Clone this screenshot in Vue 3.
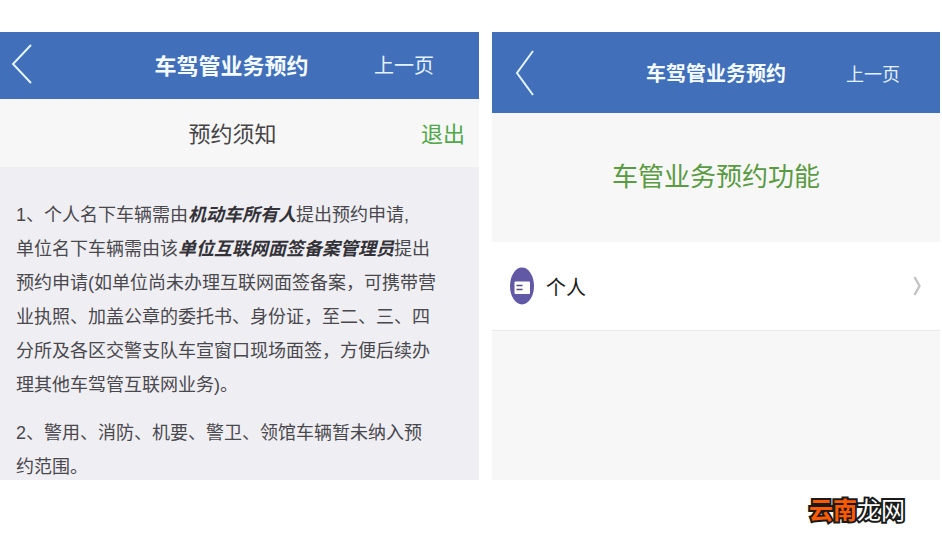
<template>
  <div class="page">
    <main class="screens">
      <section class="screen notice">
        <header class="bar">
          <button class="back" type="button" aria-label="返回">
            <svg width="22" height="42" viewBox="0 0 22 42"><path d="M20 2 L2 21 L20 40" /></svg>
          </button>
          <h1>车驾管业务预约</h1>
          <a class="prev" href="#">上一页</a>
        </header>
        <div class="sub-bar">
          <h2>预约须知</h2>
          <button class="exit" type="button">退出</button>
        </div>
        <div class="content">
          <p>
            1、个人名下车辆需由<em>机动车所有人</em>提出预约申请,<br />
            单位名下车辆需由该<em>单位互联网面签备案管理员</em>提出<br />
            预约申请(如单位尚未办理互联网面签备案，可携带营<br />
            业执照、加盖公章的委托书、身份证，至二、三、四<br />
            分所及各区交警支队车宣窗口现场面签，方便后续办<br />
            理其他车驾管互联网业务)。
          </p>
          <p>
            2、警用、消防、机要、警卫、领馆车辆暂未纳入预<br />
            约范围。
          </p>
        </div>
      </section>

      <section class="screen menu">
        <header class="bar">
          <button class="back" type="button" aria-label="返回">
            <svg width="20" height="48" viewBox="0 0 20 48"><path d="M18 2 L2 24 L18 46" /></svg>
          </button>
          <h1>车驾管业务预约</h1>
          <a class="prev" href="#">上一页</a>
        </header>
        <h2 class="menu-title">车管业务预约功能</h2>
        <a v-for="item in items" :key="item" class="row" href="#">
          <svg class="badge" width="24" height="38" viewBox="0 0 24 38">
            <ellipse cx="12" cy="19" rx="12" ry="18.5" fill="#6259a6" />
            <rect x="4.5" y="14.5" width="15.5" height="12.5" rx="1" fill="#fff" />
            <path d="M6.5 18.5 H12.5 M6.5 22.5 H12.5" stroke="#554d80" stroke-width="1.6" />
          </svg>
          <span>{{ item }}</span>
          <svg class="chevron" width="9" height="22" viewBox="0 0 9 22"><path d="M2.5 2 L7.5 11 L2.5 20" /></svg>
        </a>
      </section>
    </main>

    <footer class="footer">
      <span class="logo"><b>云南</b>龙网</span>
    </footer>
  </div>
</template>

<script setup>
const items = ['个人'];
</script>

<style>
body {
  margin: 0;
  background: #fff;
}
</style>

<style scoped>
.page {
  display: flex;
  flex-direction: column;
  height: 100vh;
  box-sizing: border-box;
  padding-top: 32px;
  font-family: 'Liberation Sans', 'Noto Sans CJK SC', sans-serif;
}

.screens {
  flex: 1;
  min-height: 0;
  display: grid;
  grid-template-columns: 479fr 448fr;
  grid-template-rows: 100%;
  gap: 13px;
  padding-right: 2px;
}

.screen {
  min-width: 0;
  overflow: hidden;
  background: #f7f7f7;
}

h1, h2, p {
  margin: 0;
}

button {
  padding: 0;
  border: none;
  background: none;
  font-family: inherit;
  cursor: pointer;
}

a {
  text-decoration: none;
}

/* barre bleue */
.bar {
  display: grid;
  grid-template-columns: 1fr auto 1fr;
  align-items: center;
  box-sizing: border-box;
  background: #426fb9;
  color: #f4fcff;
}

.bar h1 {
  font-weight: 700;
}

.back {
  justify-self: start;
  display: flex;
}

.back path {
  fill: none;
  stroke: #e2f5ff;
  stroke-width: 2;
}

.prev {
  justify-self: end;
  color: #e2f2ff;
}

.notice .bar {
  height: 67px;
  padding: 0 16px 3px 0;
}

.notice .back {
  margin-left: 11px;
}

.notice h1,
.notice h2 {
  font-size: 22px;
}

.notice .prev {
  margin-right: 29px;
  font-size: 20px;
}

.sub-bar {
  display: grid;
  grid-template-columns: 1fr auto 1fr;
  align-items: center;
  box-sizing: border-box;
  height: 68px;
  padding: 0 14px 3px 0;
  background: #f7f7f8;
}

.notice .sub-bar h2 {
  grid-column: 2;
  color: #464446;
  font-weight: 400;
}

.exit {
  justify-self: end;
  color: #51a849;
  font-size: 22px;
}

.content {
  height: 100%;
  padding: 31px 16px;
  background: #efeef3;
  color: #49484d;
  font-size: 18px;
  line-height: 34px;
  white-space: nowrap;
}

.content p + p {
  margin-top: 14px;
}

.content em {
  color: #333238;
  font-weight: 700;
}

.menu .bar {
  height: 81px;
}

.menu .back {
  margin-left: 23px;
}

.menu h1 {
  font-size: 20px;
}

.menu .prev {
  margin-right: 40px;
  font-size: 18px;
}

.menu-title {
  padding: 44px 0 45px;
  color: #5a9a42;
  font-size: 26px;
  font-weight: 400;
  line-height: 40px;
  text-align: center;
}

.row {
  display: flex;
  align-items: center;
  gap: 12px;
  height: 88px;
  padding: 0 19px 0 18px;
  border-bottom: 1px solid #e9e9e9;
  background: #fff;
  color: #1c1c1c;
  font-size: 20px;
}

.chevron {
  margin-left: auto;
}

.chevron path {
  fill: none;
  stroke: #c4c4c4;
  stroke-width: 2.4;
}

.footer {
  display: flex;
  justify-content: flex-end;
  align-items: center;
  box-sizing: border-box;
  height: 58px;
  padding: 4px 37px 0 0;
}

.logo {
  color: #fff;
  font-size: 24px;
  line-height: 32px;
  -webkit-text-stroke: 4px #1a1a1a;
  paint-order: stroke fill;
}

.logo b {
  color: #ff5a00;
  font-weight: 700;
}
</style>
